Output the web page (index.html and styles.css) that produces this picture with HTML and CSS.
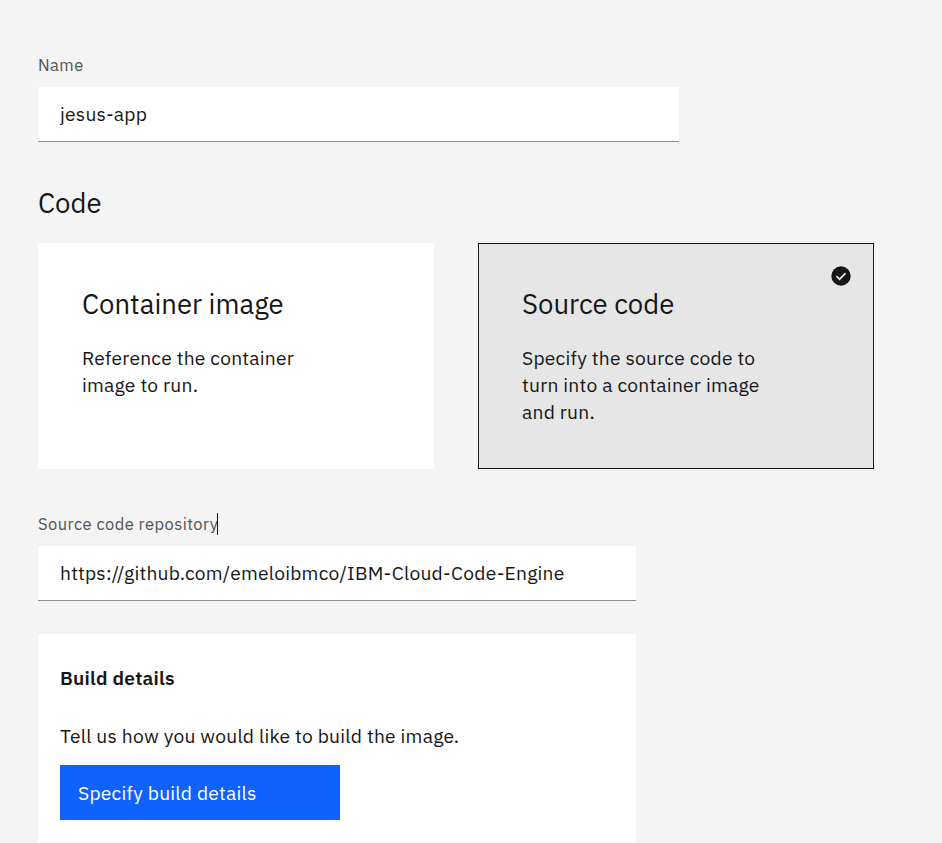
FILE: index.html
```html
<!DOCTYPE html>
<html lang="en">
<head>
<meta charset="utf-8">
<title>Create application</title>
<link rel="stylesheet" href="styles.css">
</head>
<body>
<main class="form">
  <section class="field field-name">
    <div class="label"><span>Name</span></div>
    <div class="input"><span>jesus-app</span></div>
  </section>
  <h2 class="heading">Code</h2>
  <div class="tiles">
    <article class="tile">
      <h3>Container image</h3>
      <p>Reference the container<br>image to run.</p>
    </article>
    <article class="tile selected">
      <svg class="check" viewBox="0 0 20 20"><circle cx="10" cy="10" r="9.7" fill="#161616"/><path d="M5.4 10l3.2 3.2 6-6" fill="none" stroke="#e8e8e8" stroke-width="1.7"/></svg>
      <h3>Source code</h3>
      <p>Specify the source code to<br>turn into a container image<br>and run.</p>
    </article>
  </div>
  <section class="field field-repo">
    <div class="label"><span>Source code repository</span><i class="caret"></i></div>
    <div class="input"><span>https://github.com/emeloibmco/IBM-Cloud-Code-Engine</span></div>
  </section>
  <section class="build">
    <h4>Build details</h4>
    <p>Tell us how you would like to build the image.</p>
    <button type="button">Specify build details</button>
  </section>
</main>
</body>
</html>
```
FILE: styles.css
```css
* { box-sizing: border-box; }
body { margin: 0; background: #f4f4f4; color: #161616; font-family: "IBM Plex Sans", "Noto Sans", sans-serif; font-size: 19.25px; letter-spacing: .22px; height: 843px; overflow: hidden; }
h2, h3, h4, p { margin: 0; font-weight: 400; white-space: nowrap; }
.form { padding: 54px 0 0 38px; }
.label { height: 33px; line-height: 22px; font-size: 16.5px; letter-spacing: .44px; color: #525252; display: flex; white-space: nowrap; }
.input { height: 55px; line-height: 53px; padding-left: 22px; background: #fff; border-bottom: 1px solid #8d8d8d; white-space: nowrap; }
.field-name { width: 641px; }
.heading { margin-top: 43px; height: 58px; line-height: 37px; font-size: 27.5px; letter-spacing: 0; }
.tiles { display: flex; gap: 44px; }
.tile { position: relative; width: 396px; height: 226px; padding: 42px 43px; border: 1px solid #fff; background: #fff; }
.tile.selected { background: #e6e6e6; border-color: #161616; }
.tile h3 { font-size: 27.5px; line-height: 36px; height: 58px; letter-spacing: 0; }
.tile p { line-height: 27px; }
.check { position: absolute; right: 22px; top: 22px; width: 20px; height: 20px; }
.field-repo { width: 598px; margin-top: 44px; }
.caret { width: 1px; height: 22px; margin-left: -1px; background: #161616; }
.build { width: 598px; height: 208px; margin-top: 33px; padding: 30px 22px 0; background: #fff; }
.build h4 { font-weight: 600; line-height: 28px; height: 58px; }
.build p { line-height: 28px; height: 43px; }
button { display: block; width: 280px; height: 55px; padding: 0 0 0 18px; border: 0; background: #0f62fe; color: #fff; font: inherit; letter-spacing: inherit; line-height: 56px; text-align: left; }
```
